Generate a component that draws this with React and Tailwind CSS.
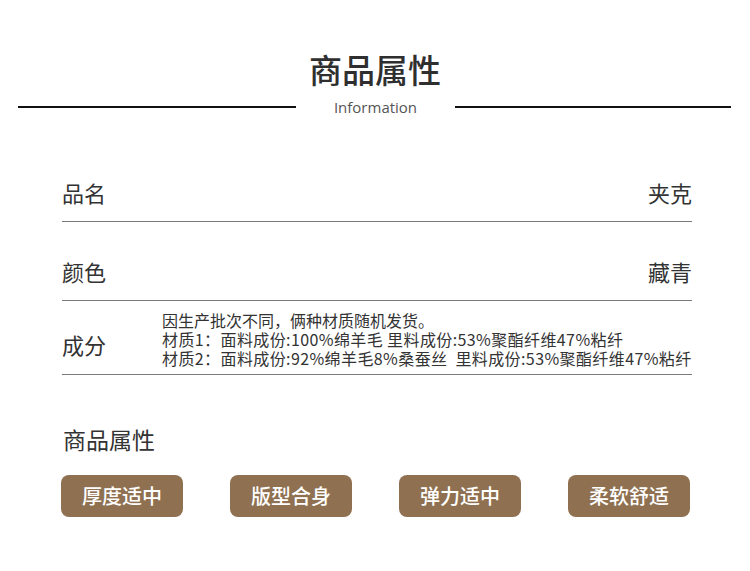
export default function App() {
  const tags = ["厚度适中", "版型合身", "弹力适中", "柔软舒适"];
  return (
    <div className="w-[750px] h-[571px] bg-white text-[#333] font-['Noto_Sans_CJK_SC','Noto_Sans',sans-serif] overflow-hidden">
      <div className="pt-[49px] flex justify-center">
        <h1 className="text-[33px] leading-[40px] font-medium text-[#2f2f2f]">商品属性</h1>
      </div>
      <div className="flex items-center mt-[8px] h-[20px]">
        <div className="ml-[18px] w-[278px] h-[2px] bg-[#111]" />
        <div className="w-[159px] text-center text-[15px] leading-[20px] text-[#555] font-['Open_Sans','Noto_Sans',sans-serif]">Information</div>
        <div className="w-[276px] h-[2px] bg-[#111]" />
      </div>
      <div className="mx-[62px] w-[630px] mt-[26px]">
        <div className="h-[79px] pt-[21px] border-b border-[#7a7a7a] flex items-center justify-between text-[22px]">
          <span>品名</span>
          <span>夹克</span>
        </div>
        <div className="h-[79px] pt-[21px] border-b border-[#7a7a7a] flex items-center justify-between text-[22px]">
          <span>颜色</span>
          <span>藏青</span>
        </div>
        <div className="h-[74px] border-b border-[#7a7a7a] flex">
          <div className="w-[100px] pt-[28px] text-[22px] leading-[30px]">成分</div>
          <div className="pt-[10px] text-[16px] leading-[19px] text-[#333] whitespace-nowrap">
            <div>因生产批次不同，俩种材质随机发货。</div>
            <div className="tracking-[0.4px]">材质1：面料成份:100%绵羊毛 里料成份:53%聚酯纤维47%粘纤</div>
            <div className="tracking-[0.4px]">材质2：面料成份:92%绵羊毛8%桑蚕丝&nbsp; 里料成份:53%聚酯纤维47%粘纤</div>
          </div>
        </div>
      </div>
      <div className="ml-[63px] mt-[49px] text-[23px] leading-[30px]">商品属性</div>
      <div className="ml-[61px] mt-[21px] flex gap-[47px]">
        {tags.map((t) => (
          <div key={t} className="w-[122px] h-[42px] rounded-[8px] bg-[#8f7152] text-white text-[20px] font-medium flex items-center justify-center">
            {t}
          </div>
        ))}
      </div>
    </div>
  );
}
